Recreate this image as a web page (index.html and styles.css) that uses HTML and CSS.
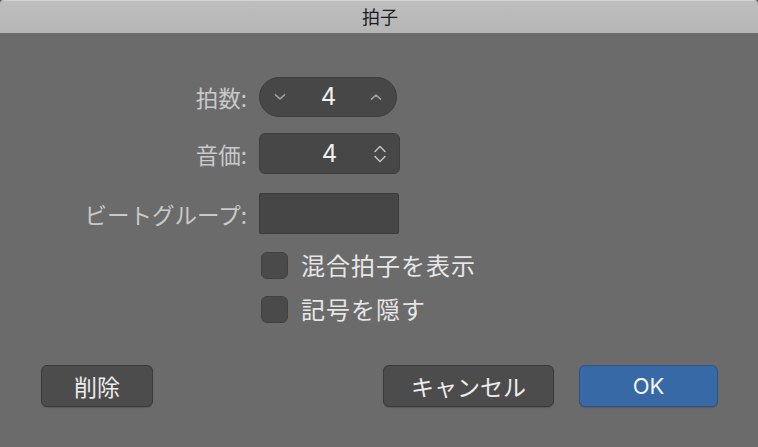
FILE: index.html
```html
<!DOCTYPE html>
<html lang="ja">
<head>
<meta charset="utf-8">
<link rel="stylesheet" href="styles.css">
</head>
<body>
<div class="window">
  <div class="titlebar">拍子</div>
  <div class="content">
    <div class="form">
      <div class="row row-beats">
        <span class="label">拍数:</span>
        <div class="stepper">
          <svg class="chev" width="12" height="8" viewBox="0 0 12 8"><path d="M1.5 1.8 L6 6 L10.5 1.8" fill="none" stroke="#a0a0a0" stroke-width="1.6" stroke-linecap="round" stroke-linejoin="round"/></svg>
          <span class="value">4</span>
          <svg class="chev" width="12" height="8" viewBox="0 0 12 8"><path d="M1.5 6.2 L6 2 L10.5 6.2" fill="none" stroke="#a0a0a0" stroke-width="1.6" stroke-linecap="round" stroke-linejoin="round"/></svg>
        </div>
      </div>
      <div class="row row-value">
        <span class="label">音価:</span>
        <div class="popup">
          <span class="value">4</span>
          <svg class="updown" width="14" height="20" viewBox="0 0 14 20"><path d="M2 7.5 L7 2.5 L12 7.5 M2 12.5 L7 17.5 L12 12.5" fill="none" stroke="#c4c4c4" stroke-width="1.5" stroke-linecap="round" stroke-linejoin="round"/></svg>
        </div>
      </div>
      <div class="row row-group">
        <span class="label">ビートグループ:</span>
        <div class="field"></div>
      </div>
      <div class="row row-check1">
        <span></span>
        <label class="check"><span class="box"></span><span class="check-text">混合拍子を表示</span></label>
      </div>
      <div class="row row-check2">
        <span></span>
        <label class="check"><span class="box"></span><span class="check-text">記号を隠す</span></label>
      </div>
    </div>
    <div class="footer">
      <button class="btn btn-delete">削除</button>
      <div class="spacer"></div>
      <button class="btn btn-cancel">キャンセル</button>
      <button class="btn btn-ok">OK</button>
    </div>
  </div>
</div>
</body>
</html>
```
FILE: styles.css
```css
html, body {
  margin: 0;
  padding: 0;
  background: #5e5e5e;
}
body {
  width: 758px;
  height: 447px;
  overflow: hidden;
  font-family: Inter, "Noto Sans CJK JP", sans-serif;
}
.window {
  width: 758px;
  height: 447px;
  display: flex;
  flex-direction: column;
  background: #6b6b6b;
  border-radius: 4px 4px 0 0;
  overflow: hidden;
}
.titlebar {
  flex: 0 0 auto;
  height: 33px;
  box-sizing: border-box;
  border-top: 1px solid #d2d2d2;
  background: linear-gradient(#bebebe, #b6b6b6);
  color: #1c1c1c;
  font-family: "Noto Sans CJK JP", sans-serif;
  font-size: 18px;
  line-height: 30px;
  text-align: center;
  padding-left: 2px;
}
.content {
  flex: 1;
  display: flex;
  flex-direction: column;
  justify-content: space-between;
  padding-top: 44px;
  padding-bottom: 40px;
}
.form {
  display: flex;
  flex-direction: column;
}
.row {
  display: grid;
  grid-template-columns: 248px auto;
  column-gap: 11px;
  align-items: center;
}
.row-value { margin-top: 16px; }
.row-group { margin-top: 19px; }
.row-check1 { margin-top: 17px; }
.row-check2 { margin-top: 16px; }
.label {
  text-align: right;
  font-family: "Noto Sans CJK JP", sans-serif;
  font-size: 22.5px;
  color: #c9c9c9;
  line-height: 28px;
  padding-right: 1px;
}
.stepper {
  width: 138px;
  height: 40px;
  box-sizing: border-box;
  border-radius: 20px;
  background: #474747;
  border: 1px solid #3f3f3f;
  display: flex;
  align-items: center;
  justify-content: space-between;
  padding: 0 14px;
}
.value {
  color: #f0f0f0;
  font-size: 24px;
  line-height: 28px;
}
.stepper .value { padding-left: 1px; }
.popup {
  width: 141px;
  height: 41px;
  box-sizing: border-box;
  border-radius: 6px;
  background: #474747;
  border: 1px solid #3f3f3f;
  display: flex;
  align-items: center;
  padding: 0 12px 0 26px;
}
.popup .value {
  flex: 1;
  text-align: center;
}
.field {
  width: 140px;
  height: 41px;
  box-sizing: border-box;
  border-radius: 2px;
  background: #464646;
  border: 1px solid #3b3b3b;
}
.check {
  display: flex;
  align-items: center;
  gap: 13px;
  margin-left: 2px;
}
.box {
  width: 27px;
  height: 27px;
  box-sizing: border-box;
  border-radius: 6px;
  background: #4a4a4a;
  border: 1px solid #414141;
}
.check-text {
  font-family: "Noto Sans CJK JP", sans-serif;
  font-size: 24px;
  letter-spacing: 1px;
  color: #e6e6e6;
  line-height: 28px;
}
.footer {
  display: flex;
  align-items: center;
  padding: 0 40px 0 41px;
  gap: 25px;
}
.spacer { flex: 1; }
.btn {
  height: 42px;
  box-sizing: border-box;
  border-radius: 6px;
  background: #4c4c4c;
  border: 1px solid #3a3a3a;
  color: #ececec;
  font-family: "Noto Sans CJK JP", sans-serif;
  font-size: 23px;
  padding: 0;
  box-shadow: 0 1px 1px rgba(0,0,0,0.15);
}
.btn-delete { width: 112px; }
.btn-cancel { width: 171px; }
.btn-ok {
  width: 139px;
  background: #3669a6;
  border-color: #2b5386;
  color: #f4f4f4;
  font-family: Inter, sans-serif;
  font-size: 22px;
}
```
